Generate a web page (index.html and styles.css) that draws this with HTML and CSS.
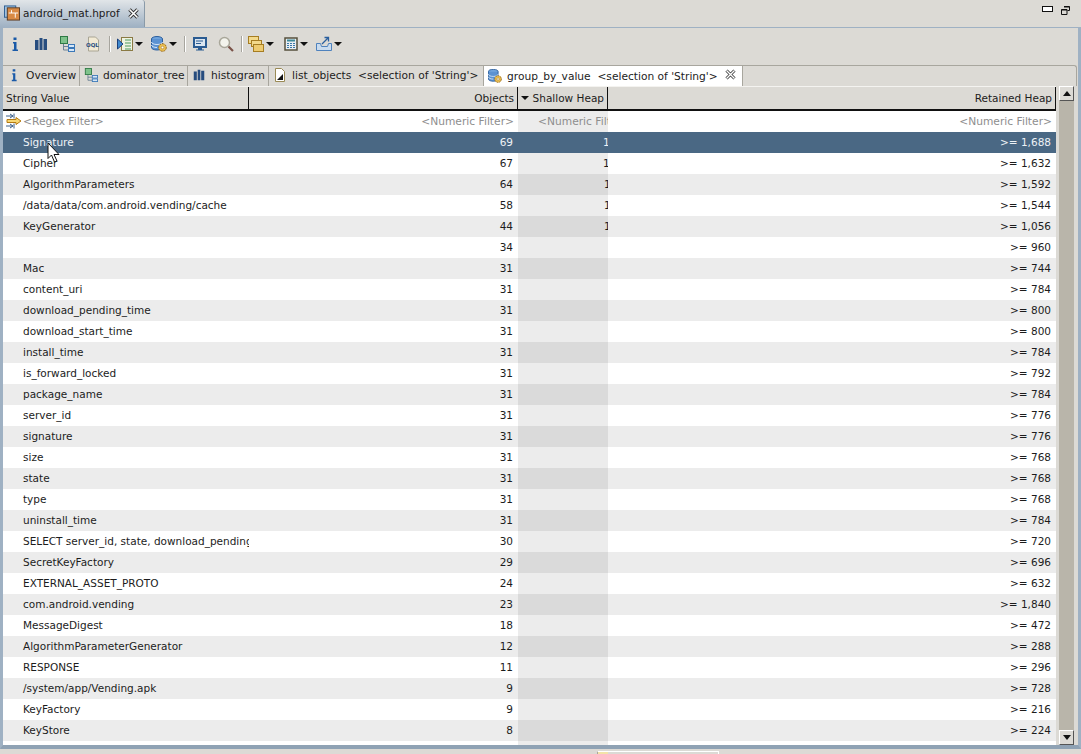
FILE: index.html
```html
<!DOCTYPE html>
<html lang="en">
<head>
<meta charset="utf-8">
<title>android_mat.hprof</title>
<link rel="stylesheet" href="styles.css">
</head>
<body>
<svg class="defs" width="0" height="0">
  <defs>
    <symbol id="i-info" viewBox="0 0 16 16"><path d="M6.500 1.500h3v2.600h-3zM6 6h3.500v7.500H11V15H5.500v-1.500H7V7.500H6z" fill="#1a5aa8"/></symbol>
    <symbol id="i-bars" viewBox="0 0 16 16"><path d="M2 4h3.500v10H2zM6.500 2h3v12h-3zM10.500 3h3.500v11h-3.500z" fill="#274d7f"/></symbol>
    <symbol id="i-tree" viewBox="0 0 16 16"><rect x="1.500" y="0.500" width="7" height="7" fill="#7fc28b" stroke="#2f7a45"/><path d="M4.500 8v6h5M4.500 10.500h5" fill="none" stroke="#6c8296"/><rect x="9.500" y="8.500" width="6" height="3" fill="#d6e6f6" stroke="#3b78b8"/><rect x="9.500" y="12.500" width="6" height="3" fill="#d6e6f6" stroke="#3b78b8"/></symbol>
    <symbol id="i-db" viewBox="0 0 16 16"><ellipse cx="6" cy="3" rx="5.500" ry="2.500" fill="#6fa3dc" stroke="#2c5f9e"/><path d="M.5 3v8.500C.5 12.900 2.900 14 6 14s5.500-1.100 5.500-2.500V3" fill="#5b92d2" stroke="#2c5f9e"/><path d="M.5 6c0 1.400 2.400 2.500 5.500 2.500S11.500 7.400 11.500 6M.5 9c0 1.400 2.400 2.500 5.500 2.500" fill="none" stroke="#d6e6f6"/><circle cx="11.500" cy="11.500" r="3.800" fill="#eabf52" stroke="#9a6a1b" stroke-dasharray="2 .8"/><circle cx="11.500" cy="11.500" r="1.300" fill="#fff" stroke="#9a6a1b" stroke-width=".5"/></symbol>
  </defs>
</svg>

<header class="editor-bar">
  <div class="editor-tab">
    <svg class="ic16" viewBox="0 0 17 16"><rect x="0.500" y="0.500" width="12" height="12" fill="#9fc0de" stroke="#2b5c92"/><rect x="3.500" y="2.500" width="13" height="13" fill="#d98a44" stroke="#5a3a20"/><path d="M5 8h10M8 5v3M12 8v5" stroke="#fff" fill="none"/></svg>
    <span class="editor-label">android_mat.hprof</span>
    <svg class="close" viewBox="0 0 11 11"><path d="M1.500 1.500l8 8M9.500 1.500l-8 8" stroke="#333" stroke-width="3.400"/><path d="M1.500 1.500l8 8M9.500 1.500l-8 8" stroke="#fff" stroke-width="1.600"/></svg>
  </div>
  <div class="win-buttons">
    <span class="win-min"></span>
    <svg class="win-restore" viewBox="0 0 9 9"><path d="M3 .5h5.500v4H6.500M.5 3.500h5.500v5H.5z" fill="none" stroke="#111"/><path d="M3 1h5.500M.5 4h5.500" stroke="#111"/></svg>
  </div>
</header>

<main class="frame">
  <div class="toolbar">
    <span class="tool t-info"><svg class="ic16"><use href="#i-info"/></svg></span>
    <span class="tool t-26"><svg class="ic16"><use href="#i-bars"/></svg></span>
    <span class="tool t-26"><svg class="ic16"><use href="#i-tree"/></svg></span>
    <span class="tool t-26"><svg class="ic16" viewBox="0 0 16 16"><path d="M3.500 1h7l3 3v11h-10z" fill="#f2ead4" stroke="#a9a594"/><text x="1" y="11" class="oql">OQL</text></svg></span>
    <span class="sep"></span>
    <span class="tool t-drop"><svg class="ic16" viewBox="0 0 16 16"><rect x="4.500" y="1.500" width="11" height="13" fill="#eef3e2" stroke="#8a7a44"/><path d="M8 4h6M8 7h6M8 10h6M8 13h6" stroke="#4c9a5c"/><path d="M0.500 3v10L6 8z" fill="#3f8ad0" stroke="#1b3f7a"/></svg><i class="arrow"></i></span>
    <span class="tool t-drop"><svg class="ic16"><use href="#i-db"/></svg><i class="arrow"></i></span>
    <span class="sep sep-b"></span>
    <span class="tool t-26"><svg class="ic16" viewBox="0 0 16 16"><rect x="2" y="2" width="12" height="9" fill="#dbe6f0" stroke="#2b5c92" stroke-width="2"/><path d="M4 5h7M4 7.500h5" stroke="#2b5c92"/><path d="M6 12h4v1.500h2v1H4v-1h2z" fill="#2b5c92"/></svg></span>
    <span class="tool t-26"><svg class="ic16" viewBox="0 0 16 16"><circle cx="6.500" cy="6.500" r="5" fill="#f3f3ec" stroke="#a9a79a" stroke-width="1.500"/><path d="M10.500 10.500L15 15" stroke="#7a5248" stroke-width="2.200"/></svg></span>
    <span class="sep sep-c"></span>
    <span class="tool t-drop"><svg class="ic16" viewBox="0 0 16 16"><rect x="0.500" y="0.500" width="10" height="7" fill="#f3d98b" stroke="#a67d22"/><rect x="3.500" y="4.500" width="10" height="6" fill="#f3d98b" stroke="#a67d22"/><rect x="5.500" y="8.500" width="10" height="7" fill="#eecb70" stroke="#a67d22"/></svg><i class="arrow"></i></span>
    <span class="tool t-drop t-calc"><svg class="ic14" viewBox="0 0 14 14"><rect x="1" y="1" width="12" height="12" fill="#e8eef2" stroke="#55503c" stroke-width="1.500"/><path d="M3 3.500h8" stroke="#3f8a9a" stroke-width="2"/><path d="M3 6.500h8M3 8.500h8M3 10.500h8" stroke="#3a78a8" stroke-dasharray="2 1"/></svg><i class="arrow"></i></span>
    <span class="tool t-drop"><svg class="ic16" viewBox="0 0 16 16"><path d="M.5 7.500h4l1 3h6l1-3h3v7H.5z" fill="#c9dbee" stroke="#4f82bd"/><path d="M6 8l6-6M8.500 1.500h4v4" fill="none" stroke="#2a5f9e" stroke-width="1.300"/></svg><i class="arrow"></i></span>
  </div>

  <nav class="subtabs">
    <div class="subtab w-overview"><svg class="ic14"><use href="#i-info"/></svg><span>Overview</span></div>
    <div class="subtab w-dom"><svg class="ic14"><use href="#i-tree"/></svg><span>dominator_tree</span></div>
    <div class="subtab w-hist"><svg class="ic14"><use href="#i-bars"/></svg><span>histogram</span></div>
    <div class="subtab w-list"><svg class="ic14" viewBox="0 0 14 14"><path d="M2.500.5h6l3 3v10h-9z" fill="#fff" stroke="#9a8a55"/><path d="M4 12l6-6v6z" fill="#111"/></svg><span>list_objects  &lt;selection of 'String'&gt;</span></div>
    <div class="subtab subtab-active w-group"><svg class="ic14"><use href="#i-db"/></svg><span class="subtab-grow">group_by_value  &lt;selection of 'String'&gt;</span>
      <svg class="close close-b" viewBox="0 0 11 11"><path d="M1.500 1.500l8 8M9.500 1.500l-8 8" stroke="#333" stroke-width="3"/><path d="M1.500 1.500l8 8M9.500 1.500l-8 8" stroke="#fff" stroke-width="1.400"/></svg>
    </div>
  </nav>

  <section class="table-wrap">
    <div class="table">
      <div class="thead">
        <div class="th th-left">String Value</div>
        <div class="th">Objects</div>
        <div class="th th-sort"><i class="sort"></i>Shallow Heap</div>
        <div class="th">Retained Heap</div>
      </div>
      <div class="row row-filter">
        <div class="cell cell-name filter"><svg class="filter-ic" viewBox="0 0 16 16"><path d="M0 3h7M4 1l3 2-3 2M0 13h7M4 11l3 2-3 2M8 .5v5M8 10.500v5" fill="none" stroke="#3b5f8a"/><path d="M1 6.500h9V4.500L15 8l-5 3.500V9.500H1z" fill="#f7d774" stroke="#b57a12"/></svg>&lt;Regex Filter&gt;</div>
        <div class="cell num filter">&lt;Numeric Filter&gt;</div>
        <div class="cell shallow filter"><span class="clip-f">&lt;Numeric Filter&gt;</span></div>
        <div class="cell num filter">&lt;Numeric Filter&gt;</div>
      </div>
      <div class="row row-selected"><div class="cell cell-name">Signature</div><div class="cell num">69</div><div class="cell shallow"><span class="clip-a">1,656</span></div><div class="cell num">&gt;= 1,688</div></div>
      <div class="row"><div class="cell cell-name">Cipher</div><div class="cell num">67</div><div class="cell shallow"><span class="clip-a">1,608</span></div><div class="cell num">&gt;= 1,632</div></div>
      <div class="row"><div class="cell cell-name">AlgorithmParameters</div><div class="cell num">64</div><div class="cell shallow"><span class="clip-b">1,536</span></div><div class="cell num">&gt;= 1,592</div></div>
      <div class="row"><div class="cell cell-name">/data/data/com.android.vending/cache</div><div class="cell num">58</div><div class="cell shallow"><span class="clip-b">1,392</span></div><div class="cell num">&gt;= 1,544</div></div>
      <div class="row"><div class="cell cell-name">KeyGenerator</div><div class="cell num">44</div><div class="cell shallow"><span class="clip-b">1,056</span></div><div class="cell num">&gt;= 1,056</div></div>
      <div class="row"><div class="cell cell-name"></div><div class="cell num">34</div><div class="cell shallow"></div><div class="cell num">&gt;= 960</div></div>
      <div class="row"><div class="cell cell-name">Mac</div><div class="cell num">31</div><div class="cell shallow"></div><div class="cell num">&gt;= 744</div></div>
      <div class="row"><div class="cell cell-name">content_uri</div><div class="cell num">31</div><div class="cell shallow"></div><div class="cell num">&gt;= 784</div></div>
      <div class="row"><div class="cell cell-name">download_pending_time</div><div class="cell num">31</div><div class="cell shallow"></div><div class="cell num">&gt;= 800</div></div>
      <div class="row"><div class="cell cell-name">download_start_time</div><div class="cell num">31</div><div class="cell shallow"></div><div class="cell num">&gt;= 800</div></div>
      <div class="row"><div class="cell cell-name">install_time</div><div class="cell num">31</div><div class="cell shallow"></div><div class="cell num">&gt;= 784</div></div>
      <div class="row"><div class="cell cell-name">is_forward_locked</div><div class="cell num">31</div><div class="cell shallow"></div><div class="cell num">&gt;= 792</div></div>
      <div class="row"><div class="cell cell-name">package_name</div><div class="cell num">31</div><div class="cell shallow"></div><div class="cell num">&gt;= 784</div></div>
      <div class="row"><div class="cell cell-name">server_id</div><div class="cell num">31</div><div class="cell shallow"></div><div class="cell num">&gt;= 776</div></div>
      <div class="row"><div class="cell cell-name">signature</div><div class="cell num">31</div><div class="cell shallow"></div><div class="cell num">&gt;= 776</div></div>
      <div class="row"><div class="cell cell-name">size</div><div class="cell num">31</div><div class="cell shallow"></div><div class="cell num">&gt;= 768</div></div>
      <div class="row"><div class="cell cell-name">state</div><div class="cell num">31</div><div class="cell shallow"></div><div class="cell num">&gt;= 768</div></div>
      <div class="row"><div class="cell cell-name">type</div><div class="cell num">31</div><div class="cell shallow"></div><div class="cell num">&gt;= 768</div></div>
      <div class="row"><div class="cell cell-name">uninstall_time</div><div class="cell num">31</div><div class="cell shallow"></div><div class="cell num">&gt;= 784</div></div>
      <div class="row"><div class="cell cell-name">SELECT server_id, state, download_pending_time</div><div class="cell num">30</div><div class="cell shallow"></div><div class="cell num">&gt;= 720</div></div>
      <div class="row"><div class="cell cell-name">SecretKeyFactory</div><div class="cell num">29</div><div class="cell shallow"></div><div class="cell num">&gt;= 696</div></div>
      <div class="row"><div class="cell cell-name">EXTERNAL_ASSET_PROTO</div><div class="cell num">24</div><div class="cell shallow"></div><div class="cell num">&gt;= 632</div></div>
      <div class="row"><div class="cell cell-name">com.android.vending</div><div class="cell num">23</div><div class="cell shallow"></div><div class="cell num">&gt;= 1,840</div></div>
      <div class="row"><div class="cell cell-name">MessageDigest</div><div class="cell num">18</div><div class="cell shallow"></div><div class="cell num">&gt;= 472</div></div>
      <div class="row"><div class="cell cell-name">AlgorithmParameterGenerator</div><div class="cell num">12</div><div class="cell shallow"></div><div class="cell num">&gt;= 288</div></div>
      <div class="row"><div class="cell cell-name">RESPONSE</div><div class="cell num">11</div><div class="cell shallow"></div><div class="cell num">&gt;= 296</div></div>
      <div class="row"><div class="cell cell-name">/system/app/Vending.apk</div><div class="cell num">9</div><div class="cell shallow"></div><div class="cell num">&gt;= 728</div></div>
      <div class="row"><div class="cell cell-name">KeyFactory</div><div class="cell num">9</div><div class="cell shallow"></div><div class="cell num">&gt;= 216</div></div>
      <div class="row"><div class="cell cell-name">KeyStore</div><div class="cell num">8</div><div class="cell shallow"></div><div class="cell num">&gt;= 224</div></div>
      <div class="row row-tail"><div class="cell"></div><div class="cell"></div><div class="cell shallow"></div><div class="cell"></div></div>
    </div>
    <div class="scrollbar">
      <span class="sb-btn"><i class="sb-up"></i></span>
      <span class="sb-track"></span>
      <span class="sb-btn"><i class="sb-down"></i></span>
    </div>
  </section>
</main>

<footer class="status">
  <div class="status-box"><span class="status-fill"></span></div>
</footer>

<svg class="cursor" viewBox="0 0 14 21"><path d="M1 1v15.500l3.500-3.500L7.500 20l2.500-1-3-6.500h5z" fill="#fff" stroke="#111"/></svg>
</body>
</html>
```

FILE: styles.css
```css
* { box-sizing: border-box; }
html, body { margin: 0; padding: 0; }
body {
  position: relative;
  width: 1081px;
  height: 754px;
  overflow: hidden;
  background: #dcdad5;
  color: #1c1c1c;
  font-family: "DejaVu Sans", sans-serif;
  font-size: 10.500px;
  display: flex;
  flex-direction: column;
}
.defs { position: absolute; }
.ic16 { width: 16px; height: 16px; display: block; flex: none; }
.ic14 { width: 14px; height: 14px; display: block; flex: none; }

.editor-bar { height: 27px; flex: none; display: flex; justify-content: space-between; }
.editor-tab {
  width: 145px;
  height: 27px;
  padding: 5px 0 0 4px;
  display: flex;
  align-items: flex-start;
  background: linear-gradient(#e1e5e8, #9fb1c3);
  border-right: 1px solid #8a9aa8;
  border-top-right-radius: 3px;
}
.editor-label { margin-left: 3px; line-height: 17px; white-space: nowrap; }
.close { width: 11px; height: 11px; flex: none; margin: 3px 0 0 8px; }
.close-b { margin: 0; }
.win-buttons { display: flex; gap: 8px; padding: 5px 11px 0 0; }
.win-min { width: 11px; height: 6px; margin-top: 1px; background: #fff; border: 1px solid #111; }
.win-restore { width: 9px; height: 9px; margin-top: 1px; }

.frame {
  height: 722px;
  flex: none;
  display: flex;
  flex-direction: column;
  border: 3px solid #9fb1c3;
  border-top: 1px solid #9fb1c3;
  border-bottom: 4px solid #8fa2b4;
}

.toolbar { height: 37px; flex: none; display: flex; align-items: center; padding-bottom: 6px; }
.tool { height: 16px; display: flex; align-items: center; flex: none; }
.t-info { width: 27px; padding-left: 4px; }
.t-26 { width: 26px; padding-left: 3px; }
.t-drop { width: 34px; padding-left: 1px; }
.t-calc { padding-left: 3px; }
.sep { height: 16px; background: #a7a59e; border-right: 1px solid #fff; margin: 0 5px 0 1px; flex: none; width: 2px; }
.sep-b { margin: 0 3px 0 0; }
.sep-c { margin: 0 4px 0 0; }
.arrow { display: block; margin-left: 2px; border: 4px solid transparent; border-top: 4px solid #111; border-bottom: 0; }
.oql { font-family: "DejaVu Sans", sans-serif; font-size: 5.500px; font-weight: 700; fill: #2c4f80; }

.subtabs {
  height: 21px;
  flex: none;
  display: flex;
  border-top: 1px solid #a8a69e;
  border-right: 1px solid #a8a69e;
  border-top-right-radius: 3px;
  margin-right: 1px;
  font-size: 10.650px;
}
.subtab {
  height: 20px;
  padding: 2px 0 0 4px;
  display: flex;
  align-items: flex-start;
  gap: 5px;
  border-right: 1px solid #a8a69e;
  white-space: pre;
  line-height: 15px;
  flex: none;
}
.subtab-active { background: #fff; height: 21px; margin-top: -1px; padding-top: 3px; border-top: 1px solid #a8a69e; }
.subtab-grow { flex: 1; }
.w-overview { width: 77px; }
.w-dom { width: 108px; }
.w-hist { width: 81px; }
.w-list { width: 215px; }
.w-group { width: 259px; padding-right: 6px; }

.table-wrap { height: 659px; flex: none; display: flex; }
.table { width: 1053px; flex: none; display: flex; flex-direction: column; overflow: hidden; }
.thead {
  height: 25px;
  flex: none;
  display: grid;
  grid-template-columns: 246px 269px 90px 448px;
  border-bottom: 2px solid #111;
  border-top: 1px solid #f4f3f0;
}
.th { line-height: 22px; text-align: right; padding-right: 3px; border-right: 1px solid #111; white-space: nowrap; }
.th-left { text-align: left; padding-left: 3px; }
.th-sort { display: flex; align-items: center; justify-content: flex-end; }
.sort { display: block; margin-right: 4px; border: 4px solid transparent; border-top: 4px solid #111; border-bottom: 0; }

.row {
  height: 21px;
  flex: none;
  display: grid;
  grid-template-columns: 246px 269px 90px 448px;
  line-height: 21px;
  background: #fff;
}
.row:nth-child(odd) { background: #ececec; }
.cell { overflow: hidden; white-space: nowrap; position: relative; }
.cell-name { padding-left: 20px; }
.num { text-align: right; padding-right: 5px; }
.shallow { background: #ececec; }
.row:nth-child(odd) .shallow { background: #dadada; }
.row:nth-child(even) .shallow { background: #ececec; }
.clip-a { padding-left: 85px; }
.clip-b { padding-left: 86px; }
.clip-f { padding-left: 20px; }

.row-filter { line-height: 21px; font-size: 10.700px; }
.row-filter .num { padding-right: 4px; }
.row.row-filter:nth-child(even) { background: #fff; }
.filter { color: #8e8e8e; }
.filter-ic { position: absolute; left: 3px; top: 2px; width: 16px; height: 16px; }

.row.row-selected, .row.row-selected .shallow { background: #4a6884; color: #eef2f6; }
.row.row-tail { height: 5px; background: #fff; }
.row.row-tail .shallow { background: #ececec; }

.scrollbar { width: 15px; margin-left: 3px; display: flex; flex-direction: column; background: #b9b5aa; }
.sb-btn {
  height: 15px;
  flex: none;
  background: #dcdad5;
  border: 1px solid #fff;
  border-right-color: #555;
  border-bottom-color: #555;
  display: flex;
  align-items: center;
  justify-content: center;
}
.sb-track { flex: 1; }
.sb-up { border: 4px solid transparent; border-bottom: 5px solid #111; border-top: 0; }
.sb-down { border: 4px solid transparent; border-top: 5px solid #111; border-bottom: 0; }

.status { flex: 1; position: relative; }
.status-box { position: absolute; left: 597px; top: 2px; width: 122px; height: 6px; border: 1px solid #fff; border-left-color: #a8a69e; border-bottom: 0; }
.status-fill { display: block; width: 10px; height: 5px; background: #f3e3a8; }

.cursor { position: absolute; left: 47px; top: 142px; width: 14px; height: 21px; }
```
